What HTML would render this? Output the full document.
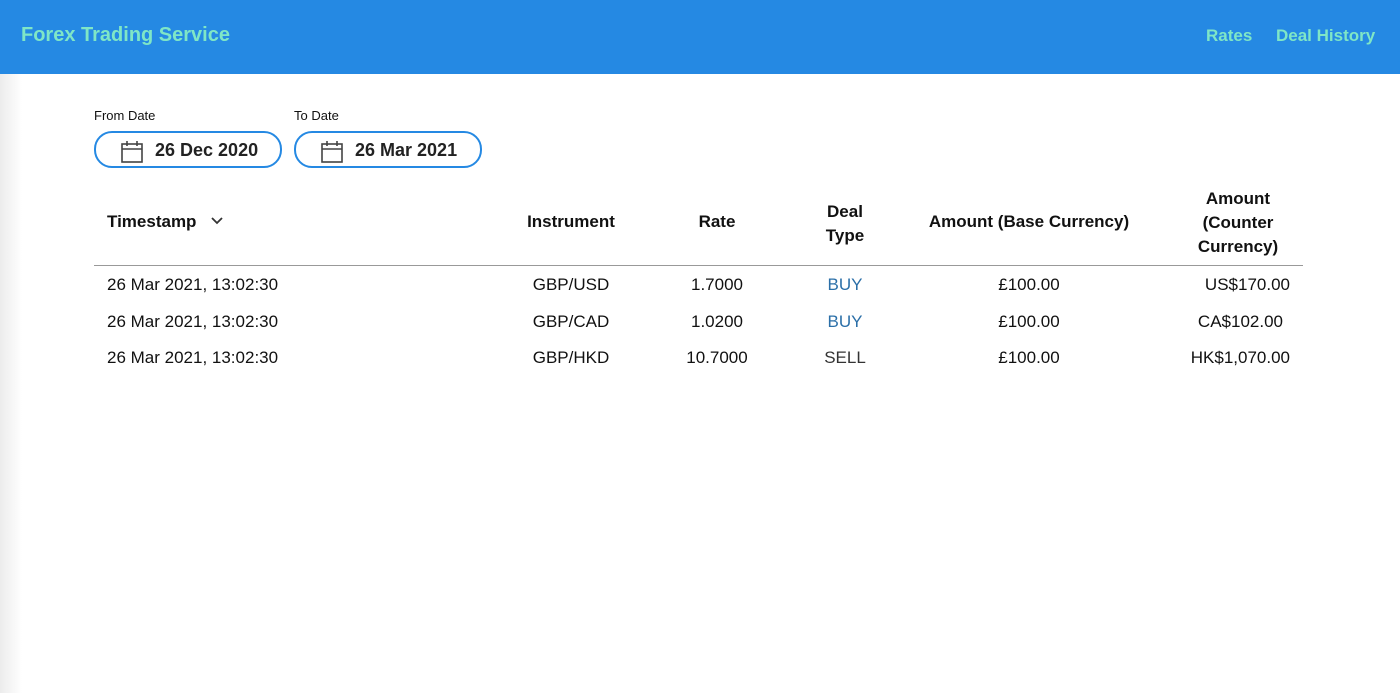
<!DOCTYPE html>
<html><head><meta charset="utf-8"><style>
body{margin:0;width:1400px;height:693px;overflow:hidden;background:#fff;font-family:"Liberation Sans",Arial,sans-serif;position:relative;color:#111}
.hdr{position:absolute;left:0;top:0;width:1400px;height:74px;background:#2589e3}
.t{position:absolute;font-size:20px;font-weight:bold;color:#7fe6c6}
.edge{position:absolute;left:0;top:74px;width:22px;height:619px;background:linear-gradient(90deg,#ececec,#fff)}
.a{position:absolute;white-space:nowrap}
.lbl{font-size:13px;color:#111}
.pill{position:absolute;top:131px;height:33px;border:2px solid #2589e3;border-radius:18px;box-sizing:content-box}
.pill span{position:absolute;left:59px;top:7px;font-size:18px;font-weight:bold;color:#222}
.pill svg{position:absolute;left:24px;top:7px}
.h{font-size:17px;font-weight:bold;text-align:center}
.c{font-size:17px;text-align:center}
</style></head><body>
<div class="hdr">
<div class="t" style="left:21px;top:24px">Forex Trading Service</div>
<div class="t" style="left:1206px;top:26px;font-size:17px">Rates</div>
<div class="t" style="left:1276px;top:26px;font-size:17px">Deal History</div>
</div>
<div class="edge"></div>
<div class="a lbl" style="left:94px;top:108px">From Date</div>
<div class="a lbl" style="left:294px;top:108px">To Date</div>
<div class="pill" style="left:94px;width:184px"><svg width="24" height="24" viewBox="0 0 24 24" fill="none" stroke="#444" stroke-width="1.6"><rect x="2" y="4" width="20" height="18"/><line x1="2" y1="9" x2="22" y2="9"/><line x1="7" y1="1" x2="7" y2="6"/><line x1="17" y1="1" x2="17" y2="6"/></svg><span>26 Dec 2020</span></div>
<div class="pill" style="left:294px;width:184px"><svg width="24" height="24" viewBox="0 0 24 24" fill="none" stroke="#444" stroke-width="1.6"><rect x="2" y="4" width="20" height="18"/><line x1="2" y1="9" x2="22" y2="9"/><line x1="7" y1="1" x2="7" y2="6"/><line x1="17" y1="1" x2="17" y2="6"/></svg><span>26 Mar 2021</span></div>

<div class="a h" style="left:107px;top:212px">Timestamp</div>
<svg class="a" style="left:210px;top:216px" width="14" height="10" viewBox="0 0 14 10"><path d="M2 2 L7 7 L12 2" fill="none" stroke="#333" stroke-width="1.8"/></svg>
<div class="a h" style="left:471px;width:200px;top:212px">Instrument</div>
<div class="a h" style="left:667px;width:100px;top:212px">Rate</div>
<div class="a h" style="left:795px;width:100px;top:200px;line-height:24px">Deal<br>Type</div>
<div class="a h" style="left:904px;width:250px;top:212px">Amount (Base Currency)</div>
<div class="a h" style="left:1168px;width:140px;top:187px;line-height:24px">Amount<br>(Counter<br>Currency)</div>
<div class="a" style="left:94px;top:265px;width:1209px;height:1px;background:#999"></div>

<div class="a c" style="left:107px;top:275px">26 Mar 2021, 13:02:30</div>
<div class="a c" style="left:471px;width:200px;top:275px">GBP/USD</div>
<div class="a c" style="left:667px;width:100px;top:275px">1.7000</div>
<div class="a c" style="left:795px;width:100px;top:275px;color:#2b6fa8">BUY</div>
<div class="a c" style="left:904px;width:250px;top:275px">£100.00</div>
<div class="a c" style="left:1140px;width:150px;top:275px;text-align:right">US$170.00</div>

<div class="a c" style="left:107px;top:312px">26 Mar 2021, 13:02:30</div>
<div class="a c" style="left:471px;width:200px;top:312px">GBP/CAD</div>
<div class="a c" style="left:667px;width:100px;top:312px">1.0200</div>
<div class="a c" style="left:795px;width:100px;top:312px;color:#2b6fa8">BUY</div>
<div class="a c" style="left:904px;width:250px;top:312px">£100.00</div>
<div class="a c" style="left:1140px;width:143px;top:312px;text-align:right">CA$102.00</div>

<div class="a c" style="left:107px;top:348px">26 Mar 2021, 13:02:30</div>
<div class="a c" style="left:471px;width:200px;top:348px">GBP/HKD</div>
<div class="a c" style="left:667px;width:100px;top:348px">10.7000</div>
<div class="a c" style="left:795px;width:100px;top:348px;color:#333">SELL</div>
<div class="a c" style="left:904px;width:250px;top:348px">£100.00</div>
<div class="a c" style="left:1140px;width:150px;top:348px;text-align:right">HK$1,070.00</div>
</body></html>
